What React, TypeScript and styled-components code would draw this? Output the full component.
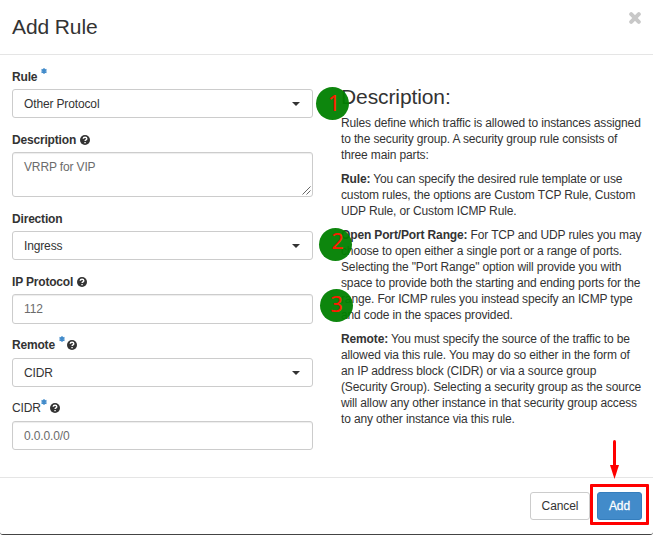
import React from "react";
import styled, { createGlobalStyle } from "styled-components";

const Global = createGlobalStyle`
  * { box-sizing: border-box; }
  body { margin: 0; background: #fff; font: 12px/16px "Liberation Sans", Arial, sans-serif; letter-spacing: -0.14px; color: #333; overflow: hidden; }
`;
const Dialog = styled.div`
  position: relative;
  width: 653px;
  height: 535px;
  display: flex;
  flex-direction: column;
  border-bottom: 1px solid #444;
  border-radius: 0 0 3px 3px;
`;
const Header = styled.header`
  height: 55px;
  padding: 0 12px;
  display: flex;
  justify-content: space-between;
  border-bottom: 1px solid #e5e5e5;
`;
const Title = styled.h3`
  margin: 15px 0 0;
  font-size: 21px;
  line-height: 24px;
  font-weight: 400;
  letter-spacing: -0.1px;
`;
const Close = styled.button`
  margin: 12px 0 0;
  padding: 0;
  width: 12px;
  height: 12px;
  border: 0;
  background: none;
  svg { display: block; }
`;
const Body = styled.main`
  height: 422px;
  padding: 0 12px;
  display: flex;
  gap: 28px;
`;
const Form = styled.form`
  flex: none;
  width: 301px;
`;
const Label = styled.label<{ $light?: boolean; $raised?: boolean }>`
  height: 34px;
  padding-top: ${(p) => (p.$raised ? 13 : 14)}px;
  display: flex;
  font-weight: ${(p) => (p.$light ? 400 : 700)};
  letter-spacing: -0.18px;
  white-space: pre;
`;
const Star = styled.span<{ $gap: number }>`
  width: 6px;
  margin-left: ${(p) => p.$gap}px;
  height: 6px;
  margin-top: -1px;
  svg { display: block; }
`;
const Help = styled.span<{ $gap: number }>`
  margin: 3px 0 0 ${(p) => p.$gap}px;
  width: 10px;
  height: 10px;
  svg { display: block; }
`;
const Control = styled.div<{ $h?: number; $typed?: boolean }>`
  height: ${(p) => p.$h ?? 29}px;
  padding: 6px 12px 0 11px;
  border: 1px solid #ccc;
  border-radius: 3px;
  display: flex;
  justify-content: space-between;
  color: ${(p) => (p.$typed ? "#6b6b6b" : "#333")};
  box-shadow: ${(p) => (p.$typed ? "inset 0 1px 1px rgba(0,0,0,.075)" : "none")};
`;
const Caret = styled.span`
  margin-top: 6px;
  width: 0;
  height: 4px;
  border: 4px solid transparent;
  border-top-color: #333;
  border-bottom: 0;
`;
const Grip = styled.svg`
  align-self: flex-end;
  margin: 0 -11px 1px 0;
`;
const Info = styled.section`
  padding-top: 28px;
  white-space: nowrap;
`;
const InfoTitle = styled.h3`
  margin: 0 0 5px;
  font-size: 21px;
  line-height: 27px;
  font-weight: 400;
  letter-spacing: -0.1px;
`;
const Para = styled.p`
  margin: 0 0 8px;
`;
const Footer = styled.footer`
  flex: 1;
  padding: 14px 11px 0;
  display: flex;
  justify-content: flex-end;
  gap: 7px;
  border-top: 1px solid #e5e5e5;
`;
const Button = styled.button<{ $primary?: boolean }>`
  width: ${(p) => (p.$primary ? 45 : 60)}px;
  height: 28px;
  padding: 0;
  border: 1px solid ${(p) => (p.$primary ? "#357ebd" : "#ccc")};
  border-radius: 3px;
  background: ${(p) => (p.$primary ? "#428bca" : "#fff")};
  color: ${(p) => (p.$primary ? "#fff" : "#333")};
  font: 12px/16px "Liberation Sans", Arial, sans-serif;
  letter-spacing: -0.1px;
  -webkit-text-stroke: ${(p) => (p.$primary ? "0.3px #fff" : "0")};
`;
const Marker = styled.div<{ $x: number; $y: number; $dx: number; $dy: number }>`
  position: absolute;
  left: ${(p) => p.$x}px;
  top: ${(p) => p.$y}px;
  width: 33px;
  height: 33px;
  border-radius: 50%;
  background: rgba(0, 128, 0, 0.95);
  color: #ff1a00;
  font: 22px/33px "Noto Sans", sans-serif;
  text-align: center;
  text-indent: ${(p) => p.$dx}px;
  span { display: block; margin-top: ${(p) => p.$dy}px; }
`;
const Highlight = styled.div`
  position: absolute;
  left: 590px;
  top: 484px;
  width: 59px;
  height: 41px;
  border: 3px solid #f00;
  border-radius: 1px;
`;
const Arrow = styled.svg`
  position: absolute;
  left: 609px;
  top: 440px;
`;

const Required = ({ gap = 4 }: { gap?: number }) => (
  <Star $gap={gap}>
    <svg width="6" height="6" viewBox="0 0 6 6" stroke="#428bca" strokeWidth="1.6">
      <path d="M3 .2v5.6M.5 1.5l5 3M5.5 1.5l-5 3" />
    </svg>
  </Star>
);
const Question = ({ gap = 4 }: { gap?: number }) => (
  <Help $gap={gap}>
    <svg width="10" height="10" viewBox="0 0 10 10">
      <circle cx="5" cy="5" r="5" fill="#333" />
      <path d="M3.2 3.8C3.3 1.8 6.8 1.8 6.8 3.8C6.8 4.9 5.1 4.8 5.1 6" fill="none" stroke="#fff" strokeWidth="1.4" />
      <path d="M4.35 6.9h1.4v1.3h-1.4z" fill="#fff" />
    </svg>
  </Help>
);

const infoBlocks = [
  { lead: "", lines: ["Rules define which traffic is allowed to instances assigned", "to the security group. A security group rule consists of", "three main parts:"] },
  { lead: "Rule:", lines: [" You can specify the desired rule template or use", "custom rules, the options are Custom TCP Rule, Custom", "UDP Rule, or Custom ICMP Rule."] },
  { lead: "Open Port/Port Range:", lines: [" For TCP and UDP rules you may", "choose to open either a single port or a range of ports.", "Selecting the \"Port Range\" option will provide you with", "space to provide both the starting and ending ports for the", "range. For ICMP rules you instead specify an ICMP type", "and code in the spaces provided."] },
  { lead: "Remote:", lines: [" You must specify the source of the traffic to be", "allowed via this rule. You may do so either in the form of", "an IP address block (CIDR) or via a source group", "(Security Group). Selecting a security group as the source", "will allow any other instance in that security group access", "to any other instance via this rule."] },
];

export default function App() {
  return (
    <>
      <Global />
      <Dialog>
        <Header>
          <Title>Add Rule</Title>
          <Close aria-label="Close">
            <svg width="12" height="12" viewBox="0 0 12 12" stroke="#c8c8c8" strokeWidth="4" strokeLinecap="round">
              <path d="M2.2 2.2l7.6 7.6M9.8 2.2l-7.6 7.6" />
            </svg>
          </Close>
        </Header>
        <Body>
          <Form>
            <Label>Rule<Required /></Label>
            <Control>Other Protocol<Caret /></Control>
            <Label>Description<Question /></Label>
            <Control $h={45} $typed>
              VRRP for VIP
              <Grip width="9" height="9" viewBox="0 0 9 9" stroke="#555" strokeWidth=".9">
                <path d="M.5 8.5l8-8M4.5 8.5l4-4" />
              </Grip>
            </Control>
            <Label>Direction</Label>
            <Control>Ingress<Caret /></Control>
            <Label>IP Protocol<Question /></Label>
            <Control $h={30} $typed>112</Control>
            <Label $raised>Remote<Required /><Question gap={2} /></Label>
            <Control>CIDR<Caret /></Control>
            <Label $light $raised>CIDR<Required gap={0} /><Question gap={3} /></Label>
            <Control $typed>0.0.0.0/0</Control>
          </Form>
          <Info>
            <InfoTitle>Description:</InfoTitle>
            {infoBlocks.map((b) => (
              <Para key={b.lines[0]}>
                {b.lead && <b>{b.lead}</b>}
                {b.lines.map((line, i) => (
                  <React.Fragment key={line}>
                    {i > 0 && <br />}
                    {line}
                  </React.Fragment>
                ))}
              </Para>
            ))}
          </Info>
        </Body>
        <Footer>
          <Button>Cancel</Button>
          <Button $primary>Add</Button>
        </Footer>
        <Marker $x={316} $y={87} $dx={3} $dy={-1}><span>1</span></Marker>
        <Marker $x={319} $y={228} $dx={4} $dy={-4}><span>2</span></Marker>
        <Marker $x={320} $y={289} $dx={0} $dy={-2}><span>3</span></Marker>
        <Highlight />
        <Arrow width="11" height="40" viewBox="0 0 11 40">
          <path d="M5.5 1.5v27" stroke="#f00" strokeWidth="3" strokeLinecap="round" />
          <path d="M1 25h9L5.5 39z" fill="#f00" />
        </Arrow>
      </Dialog>
    </>
  );
}
